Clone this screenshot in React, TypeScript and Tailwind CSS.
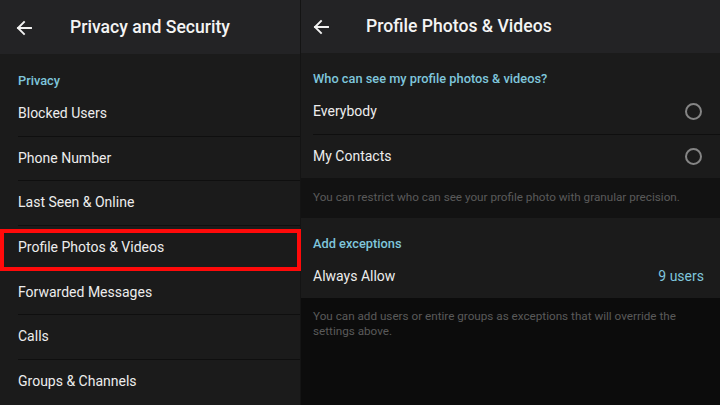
import React from "react";

const font = { fontFamily: "Roboto, 'Noto Sans', sans-serif" };

function BackArrow() {
  return (
    <svg width="16" height="16" viewBox="0 0 16 16" fill="none">
      <path d="M15 8H2M8 2L2 8l6 6" stroke="#f2f2f2" strokeWidth="1.9" strokeLinecap="square" />
    </svg>
  );
}

const privacyRows = [
  "Blocked Users",
  "Phone Number",
  "Last Seen & Online",
  "Profile Photos & Videos",
  "Forwarded Messages",
  "Calls",
  "Groups & Channels",
];

function Radio() {
  return <span className="w-[17px] h-[17px] rounded-full border-2 border-[#858585]" />;
}

export default function App() {
  return (
    <div className="w-[720px] h-[405px] flex overflow-hidden bg-[#0c0c0c]" style={font}>
      {/* left panel */}
      <div className="relative w-[301px] h-full flex flex-col bg-[#1b1b1b] border-r border-[#141414]">
        <div className="h-[54px] shrink-0 flex items-center bg-[#232325]">
          <span className="ml-[16px] mt-[1px] flex">
            <BackArrow />
          </span>
          <span className="ml-[38px] text-[17.6px] font-medium text-[#f4f4f4]">
            Privacy and Security
          </span>
        </div>
        <div className="h-[37px] shrink-0 flex items-end pb-[1px] pl-[18px] text-[12.8px] font-medium text-[#7fc6dc]">
          Privacy
        </div>
        <div className="pl-[18px]">
          {privacyRows.map((row, i) => (
            <div
              key={row}
              className={
                "h-[44.6px] flex items-center text-[14px] text-[#ededed] " +
                (i > 0 ? "border-t border-[#0f0f0f]" : "")
              }
            >
              {row}
            </div>
          ))}
        </div>
        <div className="absolute left-0 top-[229px] w-[301px] h-[42px] border-4 border-[#ff0a0a]" />
      </div>

      {/* right panel */}
      <div className="flex-1 h-full flex flex-col">
        <div className="h-[53px] shrink-0 flex items-center bg-[#232325]">
          <span className="ml-[12px] mt-[1px] flex">
            <BackArrow />
          </span>
          <span className="ml-[37px] text-[17.6px] font-medium text-[#f4f4f4]">
            Profile Photos &amp; Videos
          </span>
        </div>
        <div className="bg-[#1b1b1b]">
          <div className="h-[36px] flex items-end pb-[1px] pl-[12px] text-[12.8px] font-medium text-[#7fc6dc]">
            Who can see my profile photos &amp; videos?
          </div>
          <div className="h-[44.5px] flex items-center justify-between pl-[12px] pr-[18px] text-[14px] text-[#ededed]">
            Everybody
            <Radio />
          </div>
          <div className="h-[44.5px] flex items-center justify-between ml-[12px] pr-[18px] text-[14px] text-[#ededed] border-t border-[#0f0f0f]">
            My Contacts
            <Radio />
          </div>
        </div>
        <div className="h-[40px] shrink-0 flex items-center pl-[12px] text-[11.7px] text-[#5a5a5a] bg-[#121212]">
          You can restrict who can see your profile photo with granular precision.
        </div>
        <div className="bg-[#1b1b1b]">
          <div className="h-[37px] flex items-end pb-[2px] pl-[12px] text-[12.8px] font-medium text-[#7fc6dc]">
            Add exceptions
          </div>
          <div className="h-[43px] flex items-center justify-between pl-[12px] pr-[16px] text-[14px] text-[#ededed]">
            Always Allow
            <span className="text-[#7fc6dc]">9 users</span>
          </div>
        </div>
        <div className="flex-1 bg-[#0c0c0c] pl-[12px] pt-[11px] pr-[24px] text-[11.7px] leading-[15px] text-[#5a5a5a]">
          You can add users or entire groups as exceptions that will override the settings above.
        </div>
      </div>
    </div>
  );
}
